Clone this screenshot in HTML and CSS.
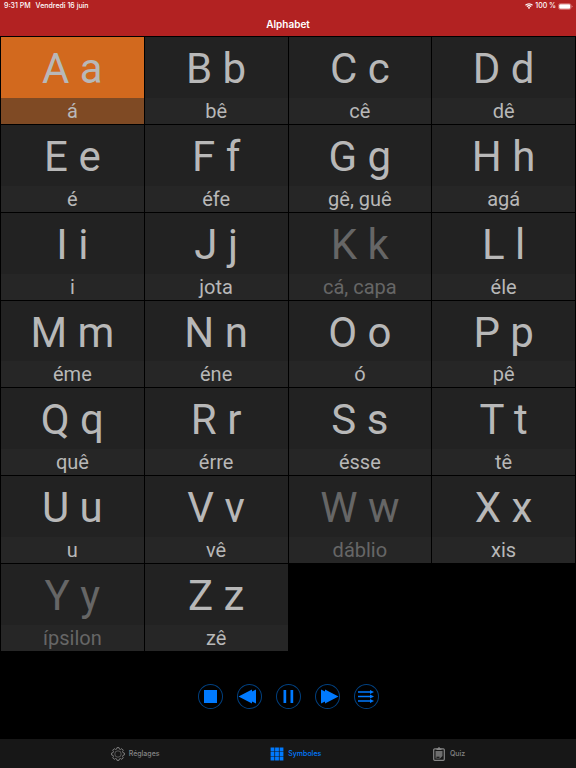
FILE: index.html
```html
<!DOCTYPE html>
<html lang="fr">
<head>
    <meta charset="UTF-8">
    <meta name="viewport" content="width=device-width, initial-scale=1.0">
    <title>Alphabet</title>

    <link rel="stylesheet" href="styles.css">
</head>
<body>
    <header>
        <div class="status">
            <span>9:31 PM</span>
            <span>Vendredi 16 juin</span>
            <span class="battery">
                <svg width="8" height="6" viewBox="0 0 16 12" fill="none" stroke="#fff" stroke-width="2.4">
                    <path d="M1 4.5a10 10 0 0 1 14 0M3.800 7.300a6 6 0 0 1 8.400 0"/>
                    <path d="M8 12L5.500 9.400a3.500 3.500 0 0 1 5 0z" fill="#fff" stroke="none"/>
                </svg>
                100 %
                <svg width="15" height="7" viewBox="0 0 15 7">
                    <rect x="0.500" y="0.500" width="12.500" height="6" rx="2" fill="none" stroke="#e08c8c" stroke-width="0.600"/>
                    <rect x="1.200" y="1.200" width="11.100" height="4.600" rx="1.200" fill="#fff"/>
                    <path d="M13.700 2.500v2q1-.3 1-1t-1-1z" fill="#e08c8c"/>
                </svg>
            </span>
        </div>
        <h1>Alphabet</h1>
    </header>

    <main id="letters"></main>

    <!-- Lecture -->
    <div class="player">
        <button aria-label="Arrêter">
            <svg viewBox="0 0 25 25"><path d="M6 6h13v13H6z"/></svg>
        </button>
        <button aria-label="Précédent">
            <svg viewBox="0 0 25 25"><path d="M1.500 12.500L15 5.500v2l4-2v14l-4-2v2z"/></svg>
        </button>
        <button aria-label="Pause">
            <svg viewBox="0 0 25 25"><path d="M7.500 6h2.700v13H7.500zM14.500 6h2.700v13h-2.700z"/></svg>
        </button>
        <button aria-label="Suivant">
            <svg viewBox="0 0 25 25"><path d="M23.500 12.500L10 5.500v2l-4-2v14l4-2v2z"/></svg>
        </button>
        <button aria-label="Tout lire">
            <svg viewBox="0 0 25 25">
                <path d="M4 7.300h12V6l4 2-4 2V8.700H4zM4 11.800h12v-1.300l4 2-4 2v-1.300H4zM4 16.300h12V15l4 2-4 2v-1.300H4z"/>
            </svg>
        </button>
    </div>

    <nav>
        <a href="#reglages">
            <svg width="14" height="14" viewBox="0 0 14 14" fill="none" stroke="currentColor">
                <circle cx="7" cy="7" r="3.200" stroke-width="0.600"/>
                <path stroke-width="0.900" stroke-linejoin="round" d="M6 .6h2l.4 1.500 1 .4 1.400-.8 1.500 1.500-.8 1.400.4 1 1.500.4v2l-1.500.4-.4 1 .8 1.400-1.500 1.500-1.400-.8-1 .4-.4 1.500H6l-.4-1.500-1-.4-1.400.8-1.500-1.500.8-1.400-.4-1L.6 8V6l1.500-.4.4-1-.8-1.400 1.500-1.500 1.400.8 1-.4z"/>
            </svg>
            Réglages
        </a>
        <a href="#symboles" class="active">
            <svg width="14" height="14" viewBox="0 0 14 14" fill="currentColor">
                <path d="M.6.6h3.800v3.800H.6zM5.100.6h3.800v3.800H5.100zM9.600.6h3.800v3.800H9.600zM.6 5.100h3.800v3.800H.6zM5.100 5.100h3.800v3.800H5.100zM9.600 5.100h3.800v3.800H9.600zM.6 9.600h3.800v3.800H.6zM5.100 9.600h3.800v3.800H5.100zM9.600 9.600h3.800v3.800H9.600z"/>
            </svg>
            Symboles
        </a>
        <a href="#quiz">
            <svg width="14" height="14" viewBox="0 0 14 14" fill="none" stroke="currentColor">
                <rect x="1.700" y="1.800" width="10.600" height="11.500" rx="1" stroke-width="1.200"/>
                <path d="M4.500 3V1.500h1.300a1.200 1.200 0 0 1 2.400 0h1.300V3z" fill="currentColor" stroke="none"/>
                <path d="M3.500 4h7v5L8 11.500H3.500z" fill="currentColor" stroke="none" opacity="0.800"/>
                <path d="M4.500 10.300h3" stroke="#171717" stroke-width="1.200"/>
            </svg>
            Quiz
        </a>
    </nav>

    <script>
        // Lettre, nom de la lettre
        const letters = [
            ["A a", "á"], ["B b", "bê"], ["C c", "cê"], ["D d", "dê"],
            ["E e", "é"], ["F f", "éfe"], ["G g", "gê, guê"], ["H h", "agá"],
            ["I i", "i"], ["J j", "jota"], ["K k", "cá, capa"], ["L l", "éle"],
            ["M m", "éme"], ["N n", "éne"], ["O o", "ó"], ["P p", "pê"],
            ["Q q", "quê"], ["R r", "érre"], ["S s", "ésse"], ["T t", "tê"],
            ["U u", "u"], ["V v", "vê"], ["W w", "dáblio"], ["X x", "xis"],
            ["Y y", "ípsilon"], ["Z z", "zê"]
        ];
        // Lettres étrangères, affichées en gris
        const foreign = ["K k", "W w", "Y y"];

        const grid = document.getElementById("letters");
        letters.forEach(([letter, name], i) => {
            const cell = document.createElement("button");
            cell.className = "cell";
            if (i === 0) cell.classList.add("selected");
            if (foreign.includes(letter)) cell.classList.add("dim");
            cell.innerHTML = `<span class="letter">${letter}</span><span class="name">${name}</span>`;
            cell.addEventListener("click", () => {
                grid.querySelector(".selected").classList.remove("selected");
                cell.classList.add("selected");
            });
            grid.appendChild(cell);
        });
    </script>
</body>
</html>
```
FILE: styles.css
```css
* {
    box-sizing: border-box;
}

body {
    display: flex;
    flex-direction: column;
    min-height: 100vh;
    margin: 0;
    background-color: #000;
    font-family: Inter, "Liberation Sans", sans-serif;
}

button {
    padding: 0;
    border: 0;
    font-family: inherit;
    cursor: pointer;
}

header {
    height: 36px;
    background-color: #b22222;
    color: #fff;
}

.status {
    display: flex;
    gap: 5px;
    padding: 0 3px 0 4px;
    font-size: 7px;
    font-weight: 500;
    line-height: 12px;
}

.battery {
    display: flex;
    align-items: center;
    gap: 2px;
    margin-left: auto;
}

h1 {
    margin: 0;
    font-size: 10px;
    font-weight: 600;
    line-height: 24px;
    text-align: center;
}

main {
    flex: 1;
    display: grid;
    grid-template-columns: repeat(4, 1fr);
    grid-auto-rows: 1fr;
    gap: 1px;
    padding: 1px;
}

.cell {
    display: flex;
    flex-direction: column;
    background-color: #222;
    color: #b8b8b8;
    font-family: Roboto, "Liberation Sans", sans-serif;
}

.letter {
    flex: 1 0 60px;
    width: 100%;
    min-height: 0;
    font-size: 42px;
    line-height: 64px;
}

.name {
    width: 100%;
    background-color: #262626;
    font-size: 20px;
    line-height: 26px;
}

.dim {
    color: #666;
}

.selected {
    background-color: #d2691e;
}

.selected .name {
    background-color: #7f4a24;
}

.player {
    display: flex;
    justify-content: center;
    gap: 14px;
    padding: 32px 0 30px;
}

.player button {
    width: 25px;
    height: 25px;
    border-radius: 50%;
    background: none;
    box-shadow: inset 0 0 0 1px #004080;
}

.player svg {
    display: block;
    fill: #007aff;
}

nav {
    display: flex;
    justify-content: space-evenly;
    height: 29px;
    background-color: #171717;
}

nav a {
    display: flex;
    align-items: center;
    gap: 4px;
    color: #858585;
    font-size: 7px;
    font-weight: 500;
    text-decoration: none;
}

nav .active {
    color: #007aff;
}
```
